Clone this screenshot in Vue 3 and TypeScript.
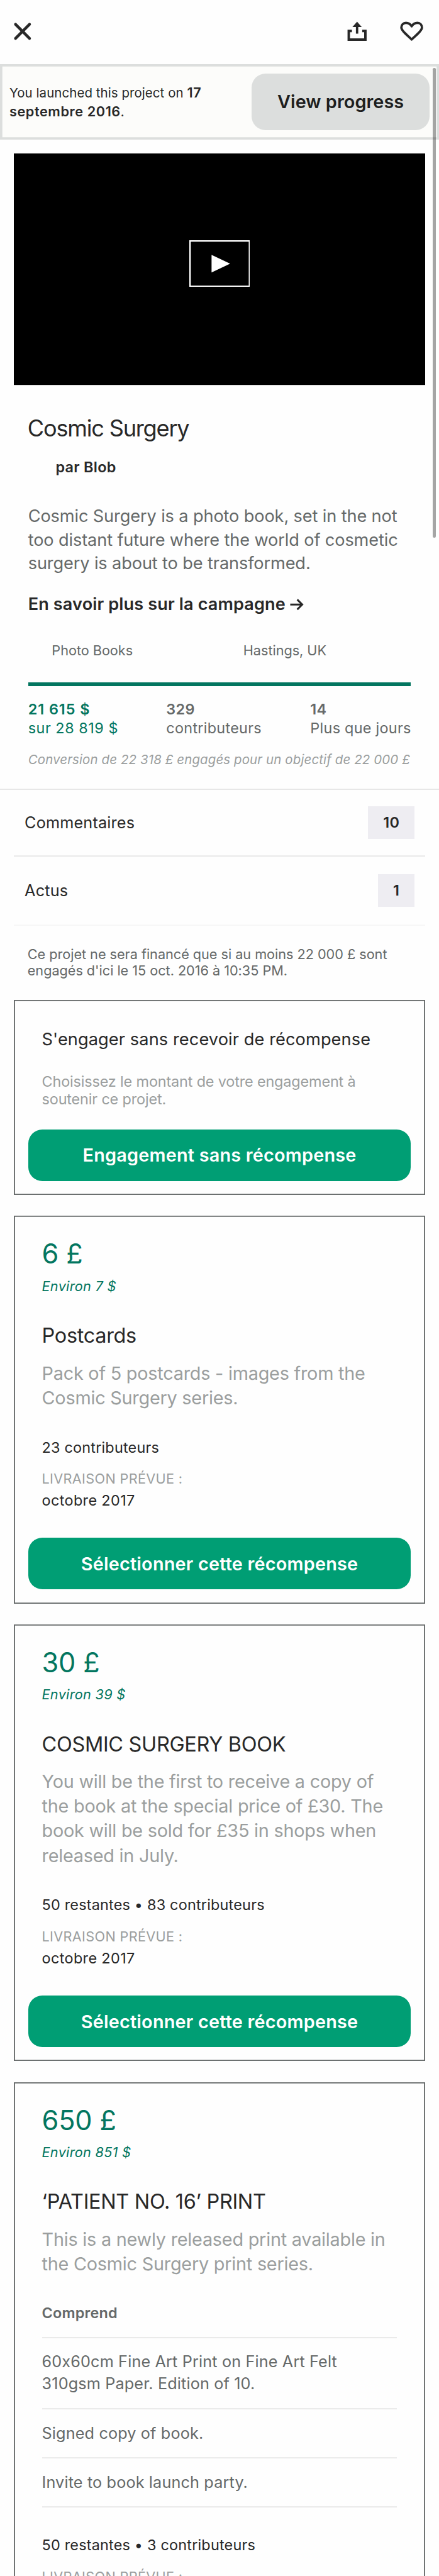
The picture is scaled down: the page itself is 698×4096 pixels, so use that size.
<script setup lang="ts">
interface Stat {
  value: string
  label: string
  highlighted?: boolean
}

interface Reward {
  price: string
  converted: string
  title: string
  description: string
  items?: string[]
  backers: string
  delivery: string
}

const stats: Stat[] = [
  { value: '21\u00a0615\u00a0$', label: 'sur 28\u00a0819\u00a0$', highlighted: true },
  { value: '329', label: 'contributeurs' },
  { value: '14', label: 'Plus que jours' },
]

const rewards: Reward[] = [
  {
    price: '6\u00a0£',
    converted: 'Environ 7\u00a0$',
    title: 'Postcards',
    description: 'Pack of 5 postcards - images from the Cosmic Surgery series.',
    backers: '23 contributeurs',
    delivery: 'octobre 2017',
  },
  {
    price: '30\u00a0£',
    converted: 'Environ 39\u00a0$',
    title: 'COSMIC SURGERY BOOK',
    description:
      'You will be the first to receive a copy of the book at the special price of £30. The book will be sold for £35 in shops when released in July.',
    backers: '50 restantes • 83 contributeurs',
    delivery: 'octobre 2017',
  },
  {
    price: '650\u00a0£',
    converted: 'Environ 851\u00a0$',
    title: '‘PATIENT NO. 16’ PRINT',
    description: 'This is a newly released print available in the Cosmic Surgery print series.',
    items: [
      '60x60cm Fine Art Print on Fine Art Felt 310gsm Paper. Edition of 10.',
      'Signed copy of book.',
      'Invite to book launch party.',
    ],
    backers: '50 restantes • 3 contributeurs',
    delivery: 'octobre 2017',
  },
]
</script>

<template>
  <div class="screen">
    <header class="topbar">
      <svg class="icon close" viewBox="0 0 34 34" aria-label="Fermer">
        <path d="M5 4.9 29 29.1M29 4.9 5 29.1" fill="none" stroke="#282828" stroke-width="4.8" stroke-linecap="round" />
      </svg>
      <svg class="icon share" viewBox="0 0 36 34" aria-label="Partager">
        <path d="M18 .6 26 9.6H20V21H16V9.6H10Z" fill="#282828" />
        <path d="M9.2 16.4H3.8V31.2H32.2V16.4H26.8" fill="none" stroke="#282828" stroke-width="4.2" />
      </svg>
      <svg class="icon heart" viewBox="0 0 42 34" aria-label="Enregistrer">
        <path
          d="M21 31C17.2 26.9 13 23.6 9.2 19.8 5.6 16.2 3.4 14 3.4 10.6 3.4 6 6.6 2.6 11.2 2.6 15.2 2.6 18.8 4.8 21 8.4 23.2 4.8 26.8 2.6 30.8 2.6 35.4 2.6 38.6 6 38.6 10.6 38.6 14 36.4 16.2 32.8 19.8 29 23.6 24.8 26.9 21 31Z"
          fill="none"
          stroke="#282828"
          stroke-width="4"
          stroke-linejoin="round"
        />
      </svg>
    </header>

    <div class="banner">
      <p class="banner-text">You launched this project on <b>17<br />septembre 2016</b>.</p>
      <button class="progress-btn">View progress</button>
    </div>

    <div class="video">
      <svg class="play" viewBox="0 0 104 80" aria-label="Lire la vidéo">
        <rect x="1.25" y="1.25" width="101.5" height="77.5" fill="none" stroke="#fff" stroke-width="2.5" />
        <path d="M38 25 69.7 40 38 55Z" fill="#fff" />
      </svg>
    </div>

    <main class="intro">
      <h1>Cosmic Surgery</h1>
      <p class="author">par Blob</p>
      <p class="blurb">
        Cosmic Surgery is a photo book, set in the not<br />too distant future where the world of cosmetic<br />surgery is about to be
        transformed.
      </p>
      <a class="more">
        <span>En savoir plus sur la campagne</span>
        <svg class="arrow" viewBox="0 0 24 22">
          <path d="M.5 11H21M12.5 2.5 21 11 12.5 19.5" fill="none" stroke="#282828" stroke-width="3.2" />
        </svg>
      </a>
      <div class="meta">
        <span>Photo Books</span>
        <span>Hastings, UK</span>
      </div>
      <div class="bar"></div>
      <div class="stats">
        <div v-for="s in stats" :key="s.label" class="stat" :class="{ highlighted: s.highlighted }">
          <strong>{{ s.value }}</strong>
          <span>{{ s.label }}</span>
        </div>
      </div>
      <p class="conversion">Conversion de 22 318 £ engagés pour un objectif de 22 000 £</p>
    </main>

    <div class="row comments">
      <span>Commentaires</span>
      <span class="badge">10</span>
    </div>
    <div class="row updates">
      <span>Actus</span>
      <span class="badge narrow">1</span>
    </div>

    <p class="notice">Ce projet ne sera financé que si au moins 22 000 £ sont<br />engagés d'ici le 15 oct. 2016 à 10:35 PM.</p>

    <section class="card pledge">
      <h2>S'engager sans recevoir de récompense</h2>
      <p class="hint">Choisissez le montant de votre engagement à<br />soutenir ce projet.</p>
      <button class="cta">Engagement sans récompense</button>
    </section>

    <section v-for="r in rewards" :key="r.title" class="card reward">
      <p class="price">{{ r.price }}</p>
      <p class="converted">{{ r.converted }}</p>
      <h3>{{ r.title }}</h3>
      <p class="desc">{{ r.description }}</p>
      <div v-if="r.items" class="includes">
        <h4>Comprend</h4>
        <p v-for="item in r.items" :key="item" class="item">{{ item }}</p>
      </div>
      <p class="backers">{{ r.backers }}</p>
      <p class="delivery-label">LIVRAISON PRÉVUE :</p>
      <p class="delivery">{{ r.delivery }}</p>
      <button class="cta">Sélectionner cette récompense</button>
    </section>

    <div class="scrollbar"></div>
  </div>
</template>

<style>
html {
  font-size: 9.3091px;
}
body {
  margin: 0;
  background: #fff;
}
</style>

<style scoped>
.screen {
  position: relative;
  box-sizing: border-box;
  width: 698px;
  height: 4096px;
  overflow: hidden;
  background: #fefefe;
  color: #282828;
  font-family: Inter, 'Liberation Sans', sans-serif;
  font-feature-settings: 'calt' 0;
}
.screen * {
  box-sizing: border-box;
}
h1,
h2,
h3,
h4,
p {
  margin: 0;
  font-weight: 400;
}
button {
  border: 0;
  padding: 0;
  font-family: inherit;
  font-weight: 600;
  border-radius: 2.4rem;
}
.topbar {
  display: flex;
  height: 11rem;
  padding: 3.7rem 2.6rem 0 2.1rem;
}
.icon {
  display: block;
  height: 3.4rem;
}
.close {
  width: 3.4rem;
  margin-right: auto;
}
.share {
  width: 3.6rem;
  margin-right: 5.4rem;
}
.heart {
  width: 4.2rem;
}
.banner {
  display: flex;
  align-items: center;
  justify-content: space-between;
  height: 12.8rem;
  padding: 0 1.6rem;
  background: #fcfcfa;
  box-shadow: inset 0 0 0 0.4rem #dcdedd;
}
.banner-text {
  padding-top: 0.2rem;
  font-size: 2.2rem;
  line-height: 3.2rem;
  letter-spacing: 0.003em;
  white-space: nowrap;
}
.banner-text b {
  font-weight: 600;
  font-size: 2.33rem;
  line-height: 1;
  letter-spacing: 0.0265em;
}
.progress-btn {
  width: 30.4rem;
  height: 9.6rem;
  background: #dcdedd;
  color: #1e1e1e;
  font-size: 3.1rem;
  letter-spacing: 0.0016em;
}
.video {
  display: flex;
  justify-content: center;
  height: 39.5rem;
  margin: 2.4rem 2.4rem 0;
  padding-top: 14.8rem;
  background: #000;
  box-shadow: 0 0.2rem 0 #e6e6e6;
}
.play {
  display: block;
  width: 10.4rem;
  height: 8rem;
}
.intro {
  height: 69.2rem;
  padding: 5.1rem 4.8rem 0;
  box-shadow: inset 0 -0.2rem 0 #e6e6e6;
}
h1 {
  margin-left: -0.1rem;
  font-size: 3.88rem;
  line-height: 4.8rem;
  letter-spacing: -0.033em;
}
.author {
  margin: 2.65rem 0 0 4.7rem;
  font-size: 2.52rem;
  font-weight: 600;
  line-height: 3.2rem;
  letter-spacing: 0.012em;
}
.blurb {
  margin-top: 4.76rem;
  color: #656969;
  font-size: 2.92rem;
  line-height: 4rem;
  letter-spacing: -0.0047em;
  white-space: nowrap;
}
.more {
  display: flex;
  align-items: center;
  gap: 0.8rem;
  margin-top: 3.01rem;
  font-size: 2.91rem;
  font-weight: 600;
  line-height: 4rem;
  letter-spacing: 0.005em;
}
.arrow {
  width: 2.4rem;
  height: 2.2rem;
}
.meta {
  display: grid;
  grid-template-columns: 32.7rem auto;
  margin: 4.51rem 0 0 4.05rem;
  color: #656969;
  font-size: 2.33rem;
  line-height: 3rem;
  letter-spacing: -0.002em;
}
.bar {
  height: 0.6rem;
  margin-top: 3.87rem;
  background: #037660;
}
.stats {
  display: grid;
  grid-template-columns: 23.6rem 24.6rem auto;
  margin-top: 2.41rem;
  color: #656969;
  font-size: 2.52rem;
  line-height: 3.18rem;
  letter-spacing: 0.011em;
  white-space: nowrap;
}
.stat {
  display: flex;
  flex-direction: column;
}
.stat strong {
  font-weight: 600;
}
.highlighted {
  color: #037660;
  letter-spacing: 0.0215em;
}
.highlighted strong {
  letter-spacing: 0.04em;
}
.conversion {
  margin-top: 2.3rem;
  color: #9b9e9e;
  font-size: 2.2rem;
  font-style: italic;
  line-height: 3rem;
  letter-spacing: 0.0056em;
  white-space: nowrap;
}
.row {
  display: flex;
  align-items: center;
  justify-content: space-between;
  margin: 0 2.4rem;
  padding: 0 1.8rem 0.2rem;
  font-size: 2.71rem;
  letter-spacing: 0.0067em;
}
.comments {
  height: 11.4rem;
  box-shadow: inset 0 -0.2rem 0 #e6e6e6;
}
.updates {
  height: 11.8rem;
  box-shadow: inset 0 -0.2rem 0 #f6f6f6;
}
.badge {
  width: 7.9rem;
  height: 5.6rem;
  background: #eeedf2;
  font-size: 2.52rem;
  font-weight: 600;
  line-height: 5.6rem;
  text-align: center;
}
.badge.narrow {
  width: 6.2rem;
}
.notice {
  margin: 3.47rem 0 3.63rem 4.7rem;
  color: #656969;
  font-size: 2.33rem;
  line-height: 2.8rem;
  letter-spacing: -0.0018em;
  white-space: nowrap;
}
.card {
  margin: 0 2.4rem 3.6rem;
  padding: 0 4.75rem 2.4rem;
  box-shadow: inset 0 0 0 0.2rem #656969;
}
.pledge {
  padding-top: 4.71rem;
}
.reward {
  padding-top: 3.64rem;
}
.cta {
  display: block;
  width: 65.4rem;
  height: 8.8rem;
  margin-left: -2.35rem;
  background: #009e74;
  color: #fff;
  font-size: 3.1rem;
  letter-spacing: 0.007em;
}
h2 {
  font-size: 2.92rem;
  line-height: 4rem;
  letter-spacing: 0.0035em;
  white-space: nowrap;
}
.hint {
  margin: 3.72rem 0 3.67rem;
  color: #9b9e9e;
  font-size: 2.52rem;
  line-height: 3rem;
  letter-spacing: -0.007em;
  white-space: nowrap;
}
.price {
  color: #037660;
  font-size: 4.65rem;
  line-height: 5.6rem;
  letter-spacing: -0.004em;
}
.converted {
  margin-top: 1.34rem;
  color: #037660;
  font-size: 2.33rem;
  font-style: italic;
  line-height: 3rem;
  letter-spacing: 0.0126em;
}
h3 {
  margin-top: 4.75rem;
  font-size: 3.49rem;
  line-height: 4.4rem;
  letter-spacing: -0.01em;
  white-space: nowrap;
}
.desc {
  margin-top: 2.01rem;
  color: #9b9e9e;
  font-size: 3.1rem;
  line-height: 4.2rem;
  letter-spacing: -0.0085em;
}
.includes {
  margin-top: 4.71rem;
  color: #656969;
}
h4 {
  height: 5.85rem;
  font-size: 2.52rem;
  font-weight: 600;
  line-height: 3.2rem;
  letter-spacing: 0.007em;
  box-shadow: inset 0 -0.2rem 0 #e6e6e6;
}
.item {
  padding: 2.2rem 0 2.4rem;
  font-size: 2.71rem;
  line-height: 3.8rem;
  letter-spacing: 0.0056em;
  box-shadow: inset 0 -0.2rem 0 #e6e6e6;
}
.backers {
  margin-top: 4.81rem;
  font-size: 2.52rem;
  line-height: 3.2rem;
  letter-spacing: 0.0078em;
}
.delivery-label {
  margin-top: 2.37rem;
  color: #9b9e9e;
  font-size: 2.33rem;
  line-height: 3rem;
  letter-spacing: 0.0148em;
}
.delivery {
  margin: 0.53rem 0 4.75rem;
  font-size: 2.52rem;
  line-height: 3.2rem;
  letter-spacing: 0.0152em;
}
.scrollbar {
  position: absolute;
  top: 11.6rem;
  left: 73.9rem;
  width: 0.5rem;
  height: 80.2rem;
  border-radius: 0.25rem;
  background: rgba(0, 0, 0, 0.35);
}
</style>
